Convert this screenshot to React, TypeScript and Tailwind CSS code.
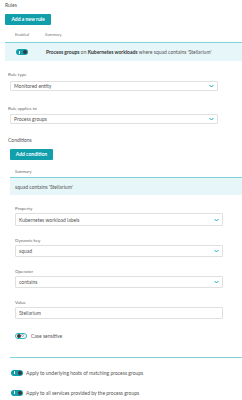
const teal = 'bg-[#119fac]';

function Toggle({ on }: { on: boolean }) {
  if (on) {
    return (
      <div className={`flex h-[6px] w-[12px] shrink-0 items-center justify-between rounded-full ${teal} pl-[3px] pr-[1px]`}>
        <div className="h-[3px] w-[1px] bg-white" />
        <div className="size-[4px] rounded-full bg-[#3a3a3a]" />
      </div>
    );
  }
  return (
    <div className="flex h-[6px] w-[12px] shrink-0 items-center justify-between rounded-full border border-[#2ab5c3] bg-white pl-[1px] pr-[2px]">
      <div className="size-[4px] rounded-full bg-[#3a3a3a]" />
      <div className="size-[3px] rounded-full border-[0.5px] border-[#999]" />
    </div>
  );
}

function Chevron() {
  return (
    <svg width="5" height="4" viewBox="0 0 5 4" className="shrink-0">
      <path d="M0.6 1 L2.5 3 L4.4 1" fill="none" stroke="#1bb0c0" strokeWidth="1" />
    </svg>
  );
}

function Label({ children, className = '' }: { children: React.ReactNode; className?: string }) {
  return <p className={`h-[6px] text-[4.5px] leading-[6px] text-[#6a6a6a] ${className}`}>{children}</p>;
}

function Select({ value, className = '' }: { value: string; className?: string }) {
  return (
    <div
      className={`flex w-[208px] items-center justify-between rounded-[1px] border border-[#e0e0e0] bg-white pl-[3px] pr-[3px] ${className}`}
    >
      <span className="text-[5px] leading-[6px] text-[#555]">{value}</span>
      <Chevron />
    </div>
  );
}

export default function App() {
  return (
    <div className="flex h-[400px] w-[242px] flex-col overflow-hidden bg-white font-['Lato',sans-serif] text-[#555]">
      <p className="ml-[5px] mt-[2px] h-[6px] text-[5px] leading-[6px]">Rules</p>

      <button className={`ml-[5px] mt-[6px] flex h-[11px] w-[46px] items-center justify-center rounded-[1px] ${teal} text-[5px] font-bold text-white`}>
        Add a new rule
      </button>

      <div className="mt-[7px] flex h-[6px] text-[4px] leading-[6px] text-[#777]">
        <span className="ml-[15px] w-[30px]">Enabled</span>
        <span>Summary</span>
      </div>

      <div className="ml-[5px] mt-[4px] flex h-[19px] items-center border-t border-[#7dd3dd] bg-[#e6f6f9] pl-[11px]">
        <Toggle on />
        <p className="ml-[18px] whitespace-nowrap text-[5px] leading-[6px]">
          <b className="text-[#333]">Process groups</b> on <b className="text-[#333]">Kubernetes workloads</b> where squad
          contains 'Stellarium'
        </p>
      </div>

      <Label className="ml-[8px] mt-[11px]">Rule type</Label>
      <Select value="Monitored entity" className="ml-[10px] mt-[3px] h-[10px]" />

      <Label className="ml-[8px] mt-[15px]">Rule applies to</Label>
      <Select value="Process groups" className="ml-[10px] mt-[2px] h-[10px]" />

      <p className="ml-[8px] mt-[13px] h-[6px] text-[5px] leading-[6px]">Conditions</p>

      <button className={`ml-[10px] mt-[6px] flex h-[11px] w-[43px] items-center justify-center rounded-[1px] ${teal} text-[5px] font-bold text-white`}>
        Add condition
      </button>

      <Label className="ml-[15px] mt-[9px] text-[4px]">Summary</Label>

      <div className="ml-[10px] mt-[2px] flex h-[18px] items-center border-t border-[#7dd3dd] bg-[#e6f6f9] pl-[5px]">
        <span className="text-[5px] leading-[6px]">squad contains 'Stellarium'</span>
      </div>

      <Label className="ml-[15px] mt-[11px]">Property</Label>
      <Select value="Kubernetes workload labels" className="ml-[15px] mt-[1px] h-[13px]" />

      <Label className="ml-[15px] mt-[12px]">Dynamic key</Label>
      <Select value="squad" className="ml-[15px] mt-[1px] h-[12px]" />

      <Label className="ml-[15px] mt-[12px]">Operator</Label>
      <Select value="contains" className="ml-[15px] mt-[1px] h-[12px]" />

      <Label className="ml-[15px] mt-[12px]">Value</Label>
      <div className="ml-[15px] mt-[1px] flex h-[12px] w-[208px] items-center rounded-[1px] border border-[#e0e0e0] pl-[3px]">
        <span className="text-[5px] leading-[6px]">Stellarium</span>
      </div>

      <div className="ml-[15px] mt-[13px] flex h-[7px] items-center gap-[4px]">
        <Toggle on={false} />
        <span className="text-[5px] leading-[6px]">Case sensitive</span>
      </div>

      <div className="ml-[10px] mt-[18px] h-[1px] bg-[#7dd3dd]" />

      <div className="ml-[11px] mt-[11px] flex h-[7px] items-center gap-[3px]">
        <Toggle on />
        <span className="text-[5px] leading-[6px]">Apply to underlying hosts of matching process groups</span>
      </div>

      <div className="ml-[11px] mt-[13px] flex h-[7px] items-center gap-[3px]">
        <Toggle on />
        <span className="text-[5px] leading-[6px]">Apply to all services provided by the process groups</span>
      </div>
    </div>
  );
}
